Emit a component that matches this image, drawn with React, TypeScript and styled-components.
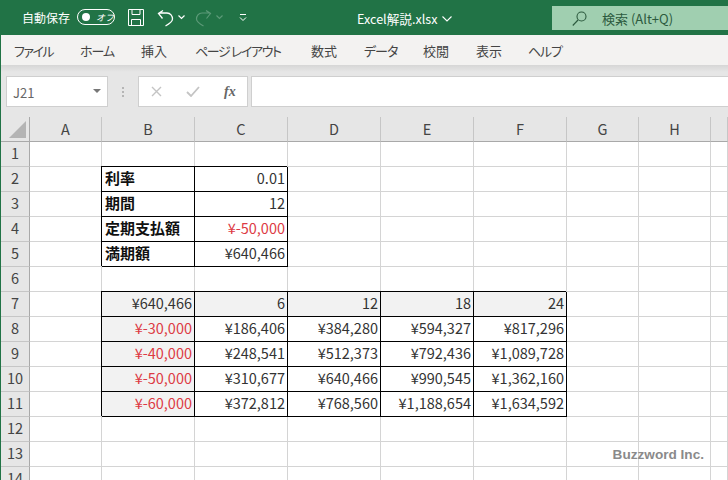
import React from 'react';
import styled, { createGlobalStyle } from 'styled-components';

const GlobalStyle = createGlobalStyle`
  html, body {
    margin: 0;
    padding: 0;
    width: 728px;
    height: 480px;
    overflow: hidden;
    background: #fff;
  }
  * { box-sizing: border-box; }
`;

const FONT = `"Noto Sans CJK JP", "Noto Sans", sans-serif`;

const Window = styled.div`
  position: relative;
  width: 728px;
  height: 480px;
  overflow: hidden;
  display: flex;
  flex-direction: column;
  font-family: ${FONT};
  border-left: 1px solid #217346;
`;

const TitleBar = styled.div`
  height: 35px;
  margin-left: -1px;
  background: #217346;
  display: flex;
  align-items: flex-start;
  color: #fff;
  flex: none;
`;

const AutoSave = styled.span`
  margin: 9px 0 0 22px;
  width: 50px;
  font-size: 12px;
  line-height: 17px;
  white-space: nowrap;
`;

const Toggle = styled.div`
  margin: 9px 0 0 5px;
  width: 38px;
  height: 16px;
  border: 1px solid #fff;
  border-radius: 8px;
  display: flex;
  align-items: center;
  padding-left: 4px;
  gap: 6px;
  font-size: 9px;
  font-style: italic;
`;

const Knob = styled.span`
  width: 8px;
  height: 8px;
  border-radius: 50%;
  background: #fff;
`;

const QuickIcon = styled.svg<{ $ml: number; $mt?: number }>`
  margin: ${p => p.$mt ?? 9}px 0 0 ${p => p.$ml}px;
  flex: none;
  display: block;
`;

const FileName = styled.div`
  margin: 10px 0 0 110px;
  font-size: 12.6px;
  line-height: 17px;
  white-space: nowrap;
  display: flex;
  align-items: center;
  gap: 5px;
`;

const SearchBox = styled.div`
  margin: 6px 0 0 auto;
  width: 176px;
  height: 24px;
  background: #a0cfb0;
  color: #2c5a3e;
  display: flex;
  align-items: center;
  padding-left: 20px;
  gap: 15px;
  font-size: 13px;
`;

const Tabs = styled.div`
  height: 30px;
  background: #f3f2f1;
  display: flex;
  align-items: center;
  flex: none;
  padding-left: 13px;
  font-size: 13px;
  font-feature-settings: "palt";
  color: #444;
`;

const Tab = styled.span<{ $w: number; $tight?: number }>`
  width: ${p => p.$w}px;
  letter-spacing: ${p => p.$tight ?? 0}px;
  white-space: nowrap;
  flex: none;
`;

const FormulaArea = styled.div`
  height: 52px;
  flex: none;
  background: linear-gradient(#d6d6d6 0, #e6e6e6 7px);
  padding: 11px 0 0 5px;
  display: flex;
  align-items: flex-start;
`;

const NameBox = styled.div`
  width: 102px;
  height: 31px;
  background: #fff;
  border: 1px solid #cfcfcf;
  display: flex;
  align-items: center;
  justify-content: space-between;
  padding: 2px 6px 0 6px;
  font-size: 13px;
  color: #666;
`;

const Caret = styled.span`
  width: 0;
  height: 0;
  margin-bottom: 4px;
  border-left: 4px solid transparent;
  border-right: 4px solid transparent;
  border-top: 4px solid #777;
`;

const Dots = styled.div`
  width: 30px;
  height: 31px;
  flex: none;
  display: flex;
  flex-direction: column;
  align-items: center;
  justify-content: center;
  gap: 2px;
`;

const Dot = styled.span`
  width: 2px;
  height: 2px;
  background: #b5b5b5;
`;

const FxButtons = styled.div`
  width: 110px;
  height: 31px;
  background: #fff;
  border: 1px solid #cfcfcf;
  display: flex;
  align-items: center;
  gap: 24px;
  padding-left: 12px;
  flex: none;
`;

const Fx = styled.span`
  font-family: "Liberation Serif", serif;
  font-style: italic;
  font-weight: 700;
  font-size: 14px;
  color: #666;
`;

const FormulaInput = styled.div`
  margin-left: 3px;
  flex: 1;
  height: 31px;
  background: #fff;
  border: 1px solid #cfcfcf;
  border-right: none;
`;

const Sheet = styled.div`
  flex: 1;
  display: grid;
  grid-template-columns: 29px 72px repeat(5, 93px) 72px 72px 1fr;
  grid-auto-rows: 25px;
  grid-template-rows: 25px;
  color: #333;
  background: #fff;
`;

const ColHead = styled.div`
  background: #e6e6e6;
  border-right: 1px solid #c6c6c6;
  border-bottom: 1px solid #a9a9a9;
  display: flex;
  align-items: center;
  justify-content: center;
  padding-bottom: 2px;
  font-size: 14.5px;
  color: #444;
`;

const Corner = styled(ColHead)`
  position: relative;
  border-right: 1px solid #a9a9a9;
`;

const CornerMark = styled.svg`
  position: absolute;
  right: 3px;
  bottom: 3px;
`;

const RowHead = styled.div`
  background: #e6e6e6;
  border-right: 1px solid #a9a9a9;
  border-bottom: 1px solid #c6c6c6;
  display: flex;
  align-items: center;
  justify-content: center;
  padding-bottom: 2px;
  font-size: 14.5px;
  line-height: 1;
  color: #444;
`;

const Cell = styled.div<{ $boxed?: boolean; $shade?: boolean; $red?: boolean; $bold?: boolean; $left?: boolean }>`
  border-right: 1px solid ${p => (p.$boxed ? '#000' : '#d4d4d4')};
  border-bottom: 1px solid ${p => (p.$boxed ? '#000' : '#d4d4d4')};
  ${p => p.$boxed && 'box-shadow: -1px -1px 0 #000;'}
  background: ${p => (p.$shade ? '#f2f2f2' : '#fff')};
  color: ${p => (p.$red ? '#dd3a44' : p.$bold ? '#111' : '#333')};
  font-weight: ${p => (p.$bold ? 700 : 400)};
  font-size: ${p => (p.$bold ? 15 : 14.5)}px;
  display: flex;
  align-items: center;
  justify-content: ${p => (p.$left ? 'flex-start' : 'flex-end')};
  padding: 0 2px ${p => (p.$bold ? 4 : 2)}px 3px;
  white-space: nowrap;
  line-height: 1;
`;

const Watermark = styled.div`
  position: absolute;
  right: 24px;
  top: 447px;
  font-family: "Liberation Sans", sans-serif;
  font-weight: 700;
  font-size: 13.6px;
  color: #8a8a8a;
`;

type CellSpec = { text: string; red?: boolean; bold?: boolean; left?: boolean; shade?: boolean };

// sheet data: row number -> cells starting at column B
const rowsData: Record<number, CellSpec[]> = {
  2: [{ text: '利率', bold: true, left: true }, { text: '0.01' }],
  3: [{ text: '期間', bold: true, left: true }, { text: '12' }],
  4: [{ text: '定期支払額', bold: true, left: true }, { text: '¥-50,000', red: true }],
  5: [{ text: '満期額', bold: true, left: true }, { text: '¥640,466' }],
  7: [
    { text: '¥640,466', shade: true },
    { text: '6', shade: true },
    { text: '12', shade: true },
    { text: '18', shade: true },
    { text: '24', shade: true },
  ],
  8: [
    { text: '¥-30,000', red: true, shade: true },
    { text: '¥186,406' },
    { text: '¥384,280' },
    { text: '¥594,327' },
    { text: '¥817,296' },
  ],
  9: [
    { text: '¥-40,000', red: true, shade: true },
    { text: '¥248,541' },
    { text: '¥512,373' },
    { text: '¥792,436' },
    { text: '¥1,089,728' },
  ],
  10: [
    { text: '¥-50,000', red: true, shade: true },
    { text: '¥310,677' },
    { text: '¥640,466' },
    { text: '¥990,545' },
    { text: '¥1,362,160' },
  ],
  11: [
    { text: '¥-60,000', red: true, shade: true },
    { text: '¥372,812' },
    { text: '¥768,560' },
    { text: '¥1,188,654' },
    { text: '¥1,634,592' },
  ],
};

const columns = ['A', 'B', 'C', 'D', 'E', 'F', 'G', 'H', ''];
const tabs: [string, number, number?][] = [
  ['ファイル', 66, -1.5],
  ['ホーム', 61, -1],
  ['挿入', 54],
  ['ページ レイアウト', 116, -1.4],
  ['数式', 53],
  ['データ', 59, -1],
  ['校閲', 53],
  ['表示', 52],
  ['ヘルプ', 60, -1.2],
];

const renderRow = (row: number) => {
  const cells = rowsData[row] || [];
  return (
    <React.Fragment key={row}>
      <RowHead>{row}</RowHead>
      {columns.map((_, i) => {
        const spec = cells[i - 1];
        if (!spec) return <Cell key={i} />;
        return (
          <Cell key={i} $boxed $shade={spec.shade} $red={spec.red} $bold={spec.bold} $left={spec.left}>
            {spec.text}
          </Cell>
        );
      })}
    </React.Fragment>
  );
};

const App: React.FC = () => (
  <Window>
    <GlobalStyle />
    <TitleBar>
      <AutoSave>自動保存</AutoSave>
      <Toggle>
        <Knob />
        オフ
      </Toggle>
      <QuickIcon $ml={13} width="16" height="17" viewBox="0 0 16 17" fill="none" stroke="#fff" strokeWidth="1">
        <path d="M.5.5h15v16H.5zM4 .5v5h8v-5M3.5 16.5v-6h9v6" />
      </QuickIcon>
      <QuickIcon $ml={13} width="17" height="18" viewBox="0 0 17 18" fill="none" stroke="#fff" strokeWidth="1.3">
        <path d="M6 1.5 1.5 4.5 5.5 9.5M2 4H10C13.5 4 15.5 7 15.5 10C15.5 13 12 15 8.5 17" />
      </QuickIcon>
      <QuickIcon $ml={4} $mt={15} width="7" height="5" viewBox="0 0 7 5" fill="none" stroke="#fff" strokeWidth="1.2">
        <path d="M.5.5 3.5 3.5 6.5.5" />
      </QuickIcon>
      <QuickIcon $ml={10} width="17" height="18" viewBox="0 0 17 18" fill="none" stroke="#5c9a78" strokeWidth="1.2">
        <path d="M11 1.5 15.5 4.5 11.5 9.5M15 4H7C3.5 4 1.5 7 1.5 10C1.5 13 5 15 8.5 17" />
      </QuickIcon>
      <QuickIcon $ml={4} $mt={15} width="7" height="5" viewBox="0 0 7 5" fill="none" stroke="#5c9a78" strokeWidth="1.2">
        <path d="M.5.5 3.5 3.5 6.5.5" />
      </QuickIcon>
      <QuickIcon $ml={16} $mt={14} width="8" height="9" viewBox="0 0 8 9" fill="none" stroke="#fff" strokeWidth="1">
        <path d="M1 .5h6M1 3.5l3 3 3-3" />
      </QuickIcon>
      <FileName>
        Excel解説.xlsx
        <svg width="10" height="6" viewBox="0 0 10 6" fill="none" stroke="#fff" strokeWidth="1.1">
          <path d="M.5.5 5 5 9.5.5" />
        </svg>
      </FileName>
      <SearchBox>
        <svg width="15" height="15" viewBox="0 0 15 15" fill="none" stroke="#2c5a3e" strokeWidth="1.1">
          <circle cx="9.5" cy="5.5" r="4.5" />
          <path d="M6 9 .8 14.5" />
        </svg>
        検索 (Alt+Q)
      </SearchBox>
    </TitleBar>
    <Tabs>
      {tabs.map(([label, w, tight]) => (
        <Tab key={label} $w={w} $tight={tight}>
          {label}
        </Tab>
      ))}
    </Tabs>
    <FormulaArea>
      <NameBox>
        J21
        <Caret />
      </NameBox>
      <Dots>
        <Dot />
        <Dot />
        <Dot />
      </Dots>
      <FxButtons>
        <svg width="11" height="11" viewBox="0 0 11 11" stroke="#c4c4c4" strokeWidth="1.4" fill="none">
          <path d="M1 1l9 9M10 1l-9 9" />
        </svg>
        <svg width="14" height="11" viewBox="0 0 14 11" stroke="#c4c4c4" strokeWidth="1.8" fill="none">
          <path d="M1 6l4 4 8-9" />
        </svg>
        <Fx>fx</Fx>
      </FxButtons>
      <FormulaInput />
    </FormulaArea>
    <Sheet>
      <Corner>
        <CornerMark width="17" height="17" viewBox="0 0 17 17">
          <path d="M17 0v17H0z" fill="#b4b4b4" />
        </CornerMark>
      </Corner>
      {columns.map((c, i) => (
        <ColHead key={i}>{c}</ColHead>
      ))}
      {Array.from({ length: 14 }, (_, i) => renderRow(i + 1))}
    </Sheet>
    <Watermark>Buzzword Inc.</Watermark>
  </Window>
);

export default App;
